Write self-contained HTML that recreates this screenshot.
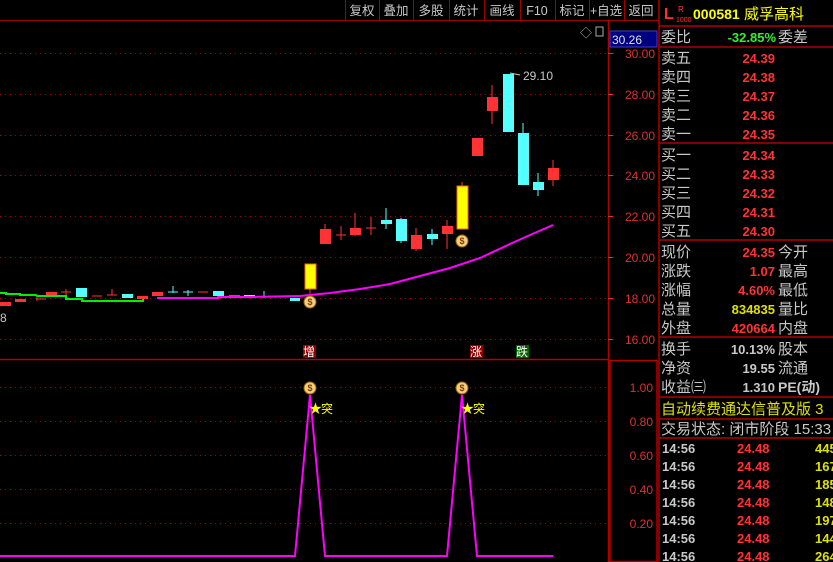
<!DOCTYPE html>
<html><head><meta charset="utf-8"><style>
html,body{margin:0;padding:0;background:#000;width:833px;height:562px;overflow:hidden}
svg{display:block}
text{font-family:"Liberation Sans","Noto Sans CJK SC",sans-serif}
.c{font-family:"Noto Sans CJK SC","WenQuanYi Zen Hei",sans-serif;font-size:15px;fill:#c8c8c8}
.v{font-size:13px;font-weight:bold;text-anchor:end}
.tb{font-family:"Noto Sans CJK SC",sans-serif;font-size:12.5px;fill:#c8c8c8;text-anchor:middle}
.ax{font-size:12px;fill:#e03030;text-anchor:end}
</style></head><body>
<svg width="833" height="562" viewBox="0 0 833 562" xmlns="http://www.w3.org/2000/svg">
<!-- toolbar -->
<g stroke="#a00000" stroke-width="1">
<line x1="0" y1="20.5" x2="659" y2="20.5"/>
<line x1="345.5" y1="0" x2="345.5" y2="20"/><line x1="379.5" y1="0" x2="379.5" y2="20"/>
<line x1="413.5" y1="0" x2="413.5" y2="20"/><line x1="449.5" y1="0" x2="449.5" y2="20"/>
<line x1="484.5" y1="0" x2="484.5" y2="20"/><line x1="520.5" y1="0" x2="520.5" y2="20"/>
<line x1="555.5" y1="0" x2="555.5" y2="20"/><line x1="589.5" y1="0" x2="589.5" y2="20"/>
<line x1="624.5" y1="0" x2="624.5" y2="20"/>
</g>
<g class="tb">
<text x="362" y="15">复权</text><text x="396" y="15">叠加</text><text x="431" y="15">多股</text>
<text x="466" y="15">统计</text><text x="502" y="15">画线</text><text x="537" y="15" style="font-family:'Liberation Sans'">F10</text>
<text x="572" y="15">标记</text><text x="606" y="15">+自选</text><text x="641" y="15">返回</text>
</g>
<!-- frame lines -->
<g stroke="#b00000" stroke-width="1.5" fill="none">
<line x1="608.5" y1="20" x2="608.5" y2="562"/>
<line x1="659" y1="0" x2="659" y2="562"/>
<line x1="0" y1="359.5" x2="608" y2="359.5"/>
<rect x="610" y="360.5" width="47" height="201"/>
</g>
<!-- grid -->
<g stroke="#a00000" stroke-width="1" stroke-dasharray="1,4">
<line x1="0" y1="53.5" x2="608" y2="53.5"/><line x1="0" y1="94.5" x2="608" y2="94.5"/>
<line x1="0" y1="135.5" x2="608" y2="135.5"/><line x1="0" y1="175.5" x2="608" y2="175.5"/>
<line x1="0" y1="216.5" x2="608" y2="216.5"/><line x1="0" y1="257.5" x2="608" y2="257.5"/>
<line x1="0" y1="298.5" x2="608" y2="298.5"/><line x1="0" y1="339.5" x2="608" y2="339.5"/>
<line x1="0" y1="387.5" x2="608" y2="387.5"/><line x1="0" y1="421.5" x2="608" y2="421.5"/>
<line x1="0" y1="455.5" x2="608" y2="455.5"/><line x1="0" y1="489.5" x2="608" y2="489.5"/>
<line x1="0" y1="523.5" x2="608" y2="523.5"/>
</g>
<!-- axis -->
<rect x="610" y="31" width="47" height="16" fill="#000080" stroke="#4040c0"/>
<text x="612" y="44" style="font-size:12px;fill:#e0e0e0">30.26</text>
<text x="580" y="37" style="font-size:12px;fill:#aaa">◇</text>
<rect x="596" y="27" width="7" height="9" fill="none" stroke="#aaa"/>
<g class="ax">
<text x="655" y="58">30.00</text><text x="655" y="99">28.00</text><text x="655" y="140">26.00</text>
<text x="655" y="180">24.00</text><text x="655" y="221">22.00</text><text x="655" y="262">20.00</text>
<text x="655" y="303">18.00</text><text x="655" y="344">16.00</text>
<text x="653" y="392">1.00</text><text x="653" y="426">0.80</text><text x="653" y="460">0.60</text>
<text x="653" y="494">0.40</text><text x="653" y="528">0.20</text>
</g>
<g stroke="#e03030" stroke-width="1"><line x1="608" y1="53.5" x2="613" y2="53.5"/><line x1="608" y1="94.5" x2="613" y2="94.5"/><line x1="608" y1="135.5" x2="613" y2="135.5"/><line x1="608" y1="175.5" x2="613" y2="175.5"/><line x1="608" y1="216.5" x2="613" y2="216.5"/><line x1="608" y1="257.5" x2="613" y2="257.5"/><line x1="608" y1="298.5" x2="613" y2="298.5"/><line x1="608" y1="339.5" x2="613" y2="339.5"/></g>
<!-- small candles left -->
<g>
<rect x="0" y="302" width="11" height="4" fill="#ff3333"/><rect x="15" y="299" width="11" height="3" fill="#ff3333"/>
<line x1="36" y1="299" x2="46" y2="299" stroke="#ff3333"/><line x1="37" y1="296" x2="37" y2="301" stroke="#ff3333"/>
<rect x="46" y="292" width="11" height="4" fill="#ff3333"/><line x1="61" y1="292" x2="71" y2="292" stroke="#ff3333"/><line x1="66" y1="289" x2="66" y2="295" stroke="#ff3333"/>
<rect x="76" y="288" width="11" height="9" fill="#55ffff"/><line x1="92" y1="296" x2="102" y2="296" stroke="#ff3333"/>
<line x1="107" y1="295" x2="117" y2="295" stroke="#ff3333"/><line x1="112" y1="289" x2="112" y2="295" stroke="#ff3333"/>
<rect x="122" y="294" width="11" height="4" fill="#55ffff"/><rect x="137" y="296" width="11" height="3" fill="#ff3333"/>
<rect x="152" y="292" width="11" height="4" fill="#ff3333"/>
<line x1="168" y1="292" x2="178" y2="292" stroke="#55ffff"/><line x1="173" y1="286" x2="173" y2="293" stroke="#55ffff"/>
<line x1="183" y1="292" x2="193" y2="292" stroke="#55ffff"/><line x1="188" y1="290" x2="188" y2="296" stroke="#55ffff"/>
<line x1="198" y1="292" x2="208" y2="292" stroke="#ff3333"/><rect x="213" y="291" width="11" height="5" fill="#55ffff"/>
<rect x="229" y="295" width="11" height="2" fill="#ff3333"/><rect x="244" y="295" width="11" height="2" fill="#55ffff"/>
<line x1="264" y1="291" x2="264" y2="298" stroke="#55ffff"/><rect x="290" y="298" width="10" height="3" fill="#55ffff"/>
</g>
<polyline fill="none" stroke="#00ee00" stroke-width="2" points="0,293 6,293 6,294 20,294 20,295 36,295 37,296 66,296 66,299 82,299 82,301 143,301 143,299"/>
<polyline fill="none" stroke="#ff00ff" stroke-width="2" points="157,298 218,298 218,297 250,297 300,296 330,293 360,289 390,284 420,276 450,268 480,258 510,244 530,235 553,225"/>
<!-- main candles -->
<g stroke-width="1">
<line x1="310" y1="289" x2="310" y2="294" stroke="#ff3333"/><rect x="305" y="264" width="11" height="25" fill="#ffff00" stroke="#ff6600"/>
<line x1="325" y1="224" x2="325" y2="244" stroke="#ff3333"/><rect x="320" y="229" width="11" height="15" fill="#ff3333"/>
<line x1="336" y1="235" x2="346" y2="235" stroke="#ff3333"/><line x1="341" y1="226" x2="341" y2="240" stroke="#ff3333"/>
<line x1="355" y1="213" x2="355" y2="236" stroke="#ff3333"/><rect x="350" y="228" width="11" height="7" fill="#ff3333"/>
<line x1="366" y1="228" x2="376" y2="228" stroke="#ff3333"/><line x1="371" y1="217" x2="371" y2="235" stroke="#ff3333"/>
<line x1="386" y1="208" x2="386" y2="229" stroke="#55ffff"/><rect x="381" y="220" width="11" height="4" fill="#55ffff"/>
<line x1="401" y1="218" x2="401" y2="243" stroke="#55ffff"/><rect x="396" y="219" width="11" height="22" fill="#55ffff"/>
<line x1="416" y1="228" x2="416" y2="251" stroke="#ff3333"/><rect x="411" y="235" width="11" height="14" fill="#ff3333"/>
<line x1="432" y1="229" x2="432" y2="245" stroke="#55ffff"/><rect x="427" y="234" width="11" height="5" fill="#55ffff"/>
<line x1="447" y1="220" x2="447" y2="249" stroke="#ff3333"/><rect x="442" y="226" width="11" height="8" fill="#ff3333"/>
<line x1="462" y1="182" x2="462" y2="229" stroke="#ff3333"/><rect x="457" y="186" width="11" height="43" fill="#ffff00" stroke="#ff6600"/>
<rect x="472" y="138" width="11" height="18" fill="#ff3333"/>
<line x1="492" y1="85" x2="492" y2="124" stroke="#ff3333"/><rect x="487" y="97" width="11" height="14" fill="#ff3333"/>
<rect x="503" y="74" width="11" height="58" fill="#55ffff"/>
<line x1="523" y1="123" x2="523" y2="185" stroke="#55ffff"/><rect x="518" y="133" width="11" height="52" fill="#55ffff"/>
<line x1="538" y1="173" x2="538" y2="196" stroke="#55ffff"/><rect x="533" y="182" width="11" height="8" fill="#55ffff"/>
<line x1="553" y1="160" x2="553" y2="186" stroke="#ff3333"/><rect x="548" y="168" width="11" height="12" fill="#ff3333"/>
</g>
<text x="523" y="80" style="font-size:12px;fill:#c8c8c8">29.10</text>
<line x1="510" y1="73" x2="520" y2="75" stroke="#c8c8c8"/>
<text x="0" y="322" style="font-size:12px;fill:#c8c8c8">8</text>
<!-- money bags -->
<g font-size="9" text-anchor="middle" font-weight="bold">
<circle cx="310" cy="302" r="6" fill="#f0d080" stroke="#a06000"/><text x="310" y="305" fill="#804000">$</text>
<circle cx="462" cy="241" r="6" fill="#f0d080" stroke="#a06000"/><text x="462" y="244" fill="#804000">$</text>
<circle cx="310" cy="388" r="6" fill="#f0d080" stroke="#a06000"/><text x="310" y="391" fill="#804000">$</text>
<circle cx="462" cy="388" r="6" fill="#f0d080" stroke="#a06000"/><text x="462" y="391" fill="#804000">$</text>
</g>
<!-- markers -->
<rect x="303" y="345" width="13" height="13" fill="#8b0000"/><text x="303" y="356" class="c" style="font-size:12px;fill:#fff">增</text>
<rect x="470" y="345" width="13" height="13" fill="#8b0000"/><text x="470" y="356" class="c" style="font-size:12px;fill:#fff">涨</text>
<rect x="516" y="345" width="13" height="13" fill="#006400"/><text x="516" y="356" class="c" style="font-size:12px;fill:#fff">跌</text>
<!-- indicator -->
<polyline fill="none" stroke="#ff00ff" stroke-width="2" points="0,556 295,556 310,395 325,556 447,556 462,395 477,556 553,556"/>
<text x="309" y="413" style="font-size:13px;fill:#ffff00">★</text><text x="321" y="413" class="c" style="font-size:12px;fill:#ffff00">突</text>
<text x="461" y="413" style="font-size:13px;fill:#ffff00">★</text><text x="473" y="413" class="c" style="font-size:12px;fill:#ffff00">突</text>
<!-- right panel -->
<text x="664" y="19" style="font-size:16px;fill:#ff3333;font-weight:bold">L</text>
<text x="678" y="12" style="font-size:8px;fill:#ff3333">R</text><text x="676" y="22" style="font-size:7px;fill:#ff3333">1000</text>
<text x="693" y="19" style="font-size:14px;fill:#ffff00;font-weight:bold">000581</text>
<text x="744" y="19" class="c" style="fill:#ffff00">威孚高科</text>
<g stroke="#b00000" stroke-width="1.5">
<line x1="659" y1="26" x2="833" y2="26"/><line x1="659" y1="47" x2="833" y2="47"/>
<line x1="659" y1="143" x2="833" y2="143"/><line x1="659" y1="240" x2="833" y2="240"/>
<line x1="659" y1="337" x2="833" y2="337"/><line x1="659" y1="397" x2="833" y2="397"/>
<line x1="659" y1="419" x2="833" y2="419"/><line x1="659" y1="438" x2="833" y2="438"/>
</g>
<text x="661" y="42" class="c">委比</text><text x="776" y="42" class="v" fill="#33ee33">-32.85%</text><text x="778" y="42" class="c">委差</text>
<g class="c">
<text x="661" y="63">卖五</text><text x="661" y="82">卖四</text><text x="661" y="101">卖三</text><text x="661" y="120">卖二</text><text x="661" y="139">卖一</text>
<text x="661" y="160">买一</text><text x="661" y="179">买二</text><text x="661" y="198">买三</text><text x="661" y="217">买四</text><text x="661" y="236">买五</text>
<text x="661" y="257">现价</text><text x="661" y="276">涨跌</text><text x="661" y="295">涨幅</text><text x="661" y="314">总量</text><text x="661" y="333">外盘</text>
<text x="778" y="257">今开</text><text x="778" y="276">最高</text><text x="778" y="295">最低</text><text x="778" y="314">量比</text><text x="778" y="333">内盘</text>
<text x="661" y="354">换手</text><text x="661" y="373">净资</text><text x="661" y="392">收益㈢</text>
<text x="778" y="354">股本</text><text x="778" y="373">流通</text><text x="778" y="392" style="font-family:'Liberation Sans','Noto Sans CJK SC',sans-serif;font-weight:bold;font-size:14px">PE(动)</text>
<text x="661" y="414" style="fill:#e0e000">自动续费通达信普及版 3</text>
<text x="661" y="434">交易状态: 闭市阶段 15:33</text>
</g>
<g class="v" fill="#ff3333">
<text x="775" y="63">24.39</text><text x="775" y="82">24.38</text><text x="775" y="101">24.37</text><text x="775" y="120">24.36</text><text x="775" y="139">24.35</text>
<text x="775" y="160">24.34</text><text x="775" y="179">24.33</text><text x="775" y="198">24.32</text><text x="775" y="217">24.31</text><text x="775" y="236">24.30</text>
<text x="775" y="257">24.35</text><text x="775" y="276">1.07</text><text x="775" y="295">4.60%</text>
<text x="775" y="314" fill="#e0e000">834835</text><text x="775" y="333">420664</text>
<text x="775" y="354" fill="#c8c8c8">10.13%</text><text x="775" y="373" fill="#c8c8c8">19.55</text><text x="775" y="392" fill="#c8c8c8">1.310</text>
</g>
<g style="font-size:13px;font-weight:bold">
<g fill="#c8c8c8"><text x="662" y="453">14:56</text><text x="662" y="471">14:56</text><text x="662" y="489">14:56</text><text x="662" y="507">14:56</text><text x="662" y="525">14:56</text><text x="662" y="543">14:56</text><text x="662" y="561">14:56</text></g>
<g fill="#ff3333"><text x="737" y="453">24.48</text><text x="737" y="471">24.48</text><text x="737" y="489">24.48</text><text x="737" y="507">24.48</text><text x="737" y="525">24.48</text><text x="737" y="543">24.48</text><text x="737" y="561">24.48</text></g>
<g fill="#e0e000"><text x="815" y="453">445</text><text x="815" y="471">167</text><text x="815" y="489">185</text><text x="815" y="507">148</text><text x="815" y="525">197</text><text x="815" y="543">144</text><text x="815" y="561">264</text></g>
</g>
</svg>
</body></html>
